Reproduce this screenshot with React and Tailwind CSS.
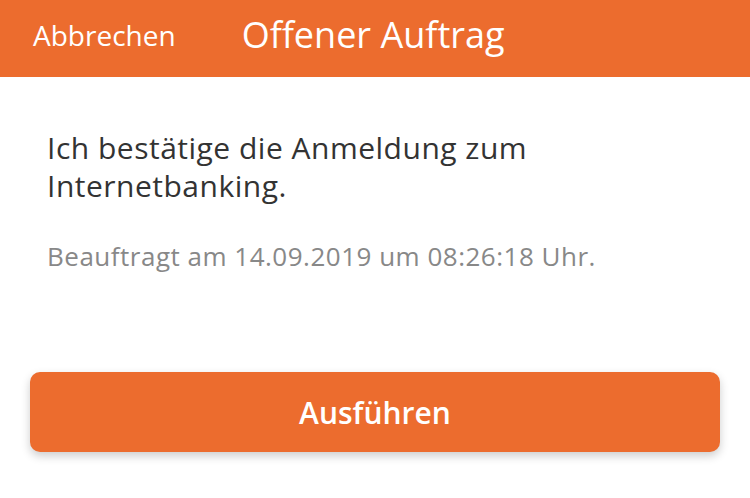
import React from "react";

const App = () => {
  return (
    <div className="w-[750px] h-[498px] bg-white overflow-hidden" style={{ fontFamily: '"Open Sans", "Noto Sans", sans-serif' }}>
      {/* Header */}
      <div className="h-[77px] bg-[#ec6c2e] flex items-center pb-[7px] text-white">
        <span className="ml-[33px] text-[28px]">Abbrechen</span>
        <span className="ml-[66px] text-[36px]">Offener Auftrag</span>
      </div>

      {/* Content */}
      <div className="px-[47px] pt-[52px]">
        <p className="text-[30px] leading-[38px] text-[#333333] tracking-[0.5px]">
          Ich bestätige die Anmeldung zum
          <br />
          Internetbanking.
        </p>
        <p className="mt-[32px] text-[26px] leading-[39px] text-[#888888] tracking-[0.5px]">
          Beauftragt am 14.09.2019 um 08:26:18 Uhr.
        </p>
      </div>

      {/* Action */}
      <div className="px-[30px] mt-[96px]">
        <button className="w-full h-[80px] rounded-[10px] bg-[#ec6c2e] text-white text-[30px] font-semibold shadow-[0_4px_10px_rgba(0,0,0,0.2)]">
          Ausführen
        </button>
      </div>
    </div>
  );
};

export default App;
